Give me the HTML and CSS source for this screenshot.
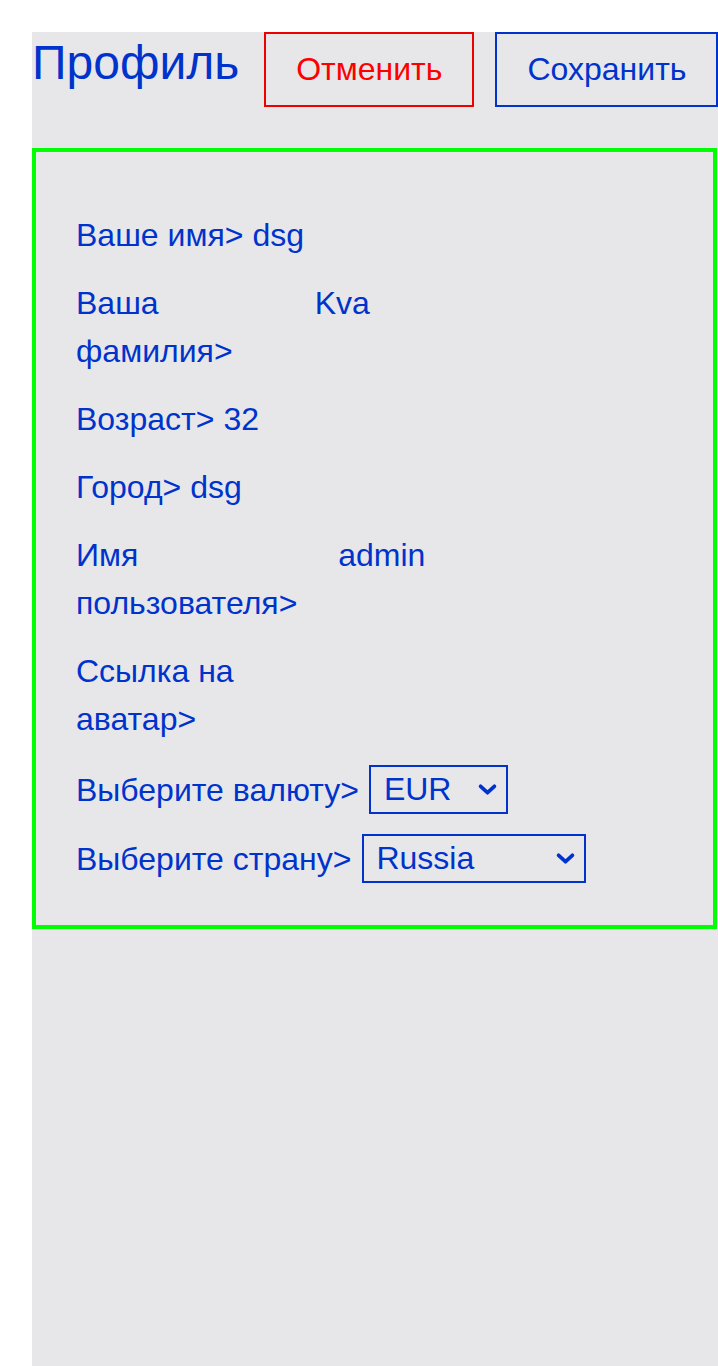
FILE: index.html
```html
<!DOCTYPE html>
<html lang="ru">
<head>
<meta charset="utf-8">
<title>Профиль</title>
<link rel="stylesheet" href="styles.css">
</head>
<body>
<div class="page">
  <header class="header">
    <h1 class="title">Профиль</h1>
    <button class="btn btn-cancel" type="button">Отменить</button>
    <button class="btn btn-save" type="button">Сохранить</button>
  </header>
  <section class="form">
    <div class="row"><span class="label">Ваше имя&gt;</span><span class="value">dsg</span></div>
    <div class="row"><span class="label">Ваша фамилия&gt;</span><span class="value">Kva</span></div>
    <div class="row"><span class="label">Возраст&gt;</span><span class="value">32</span></div>
    <div class="row"><span class="label">Город&gt;</span><span class="value">dsg</span></div>
    <div class="row"><span class="label">Имя пользователя&gt;</span><span class="value">admin</span></div>
    <div class="row"><span class="label">Ссылка на аватар&gt;</span><span class="value"></span></div>
    <div class="row row-select">
      <span class="label">Выберите валюту&gt;</span>
      <span class="select select-currency">EUR<svg class="chev" viewBox="0 0 20 12" width="19" height="11"><path d="M2.5 2.5 L10 9.5 L17.5 2.5" fill="none" stroke="#0033cc" stroke-width="4" stroke-linecap="round" stroke-linejoin="round"/></svg></span>
    </div>
    <div class="row row-select">
      <span class="label">Выберите страну&gt;</span>
      <span class="select select-country">Russia<svg class="chev" viewBox="0 0 20 12" width="19" height="11"><path d="M2.5 2.5 L10 9.5 L17.5 2.5" fill="none" stroke="#0033cc" stroke-width="4" stroke-linecap="round" stroke-linejoin="round"/></svg></span>
    </div>
  </section>
</div>
</body>
</html>
```

FILE: styles.css
```css
html, body {
  margin: 0;
  padding: 0;
  background: #ffffff;
}

body {
  font-family: "Liberation Sans", Arial, sans-serif;
  color: #0033cc;
  overflow: hidden;
}

.page {
  margin: 32px 0 0 32px;
  background: #e7e7ea;
  min-height: 1334px;
  width: 686px;
}

.header {
  display: flex;
  align-items: flex-start;
  margin-bottom: 41px;
}

.title {
  margin: 2px 0 0 0;
  font-size: 48px;
  font-weight: normal;
  line-height: 57px;
  color: #0033cc;
}

.btn {
  box-sizing: border-box;
  height: 75px;
  padding: 0 30px;
  background: transparent;
  font-family: "Liberation Sans", Arial, sans-serif;
  font-size: 32px;
  line-height: 71px;
  border: 2px solid;
  cursor: pointer;
}

.btn-cancel {
  margin-left: 25px;
  color: #ff0000;
  border-color: #ee0000;
}

.btn-save {
  margin-left: 21px;
  color: #0033cc;
  border-color: #0033cc;
}

.form {
  box-sizing: border-box;
  width: 685px;
  border: 4px solid #00ff00;
  padding: 59px 40px 42px 40px;
  display: flex;
  flex-direction: column;
  gap: 20px;
  font-size: 32px;
  line-height: 48px;
}

.row {
  display: flex;
  align-items: flex-start;
  gap: 9px;
}

.label {
  flex: 0 1 auto;
}

.value {
  flex: 0 1 387px;
}

.row-select {
  align-items: center;
  padding-top: 2px;
}

.row-select + .row-select {
  padding-top: 0;
}

.select {
  box-sizing: border-box;
  display: flex;
  align-items: center;
  justify-content: space-between;
  height: 49px;
  border: 2px solid #0033cc;
  padding: 0 9px 0 13px;
  line-height: 45px;
  flex: none;
}

.select-currency {
  width: 139px;
  margin-left: 1px;
}

.select-country {
  width: 224px;
  margin-left: 2px;
  padding-left: 12px;
}

.chev {
  display: block;
}
```
